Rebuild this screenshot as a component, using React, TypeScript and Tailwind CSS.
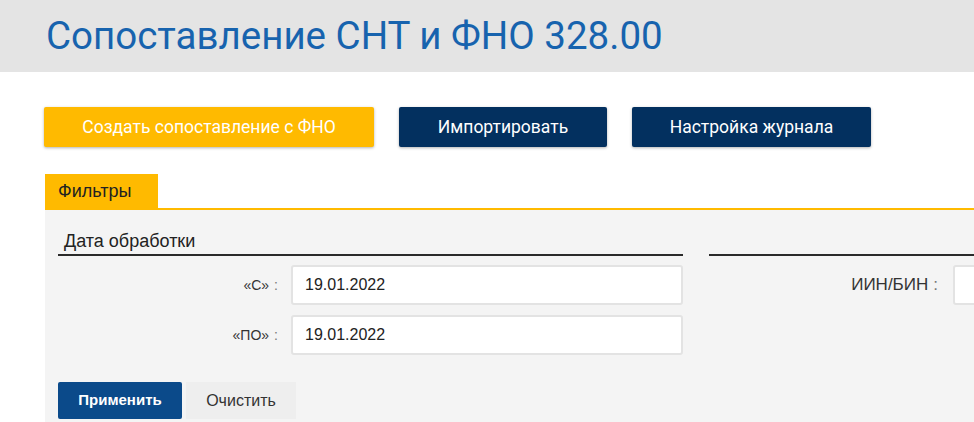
import React from "react";

const sans = { fontFamily: '"Liberation Sans", Arial, sans-serif' };

function DateRow({ label, value }: { label: string; value: string }) {
  return (
    <div className="flex items-center">
      <div className="flex w-[220px] justify-end text-[14px] text-[#333]">
        <span>{label}</span>
        <span className="ml-[5px] text-[#777]">:</span>
      </div>
      <div className="ml-[13px] flex h-[40px] w-[392px] items-center rounded-[3px] border-2 border-[#e3e3e3] bg-white pl-[12px] text-[16px] text-[#222]">
        {value}
      </div>
    </div>
  );
}

export default function App() {
  return (
    <div className="h-[422px] w-[974px] overflow-hidden bg-white" style={sans}>
      <div className="flex h-[72px] items-center bg-[#e4e4e4] pl-[46px]">
        <h1 className="font-['Roboto'] text-[38.5px] leading-[72px] text-[#1763ae]">Сопоставление СНТ и ФНО 328.00</h1>
      </div>

      <div className="mt-[35px] flex gap-[25px] pl-[44px] font-['Roboto'] text-[17.5px] text-white">
        <button className="h-[40px] w-[330px] rounded-[2px] bg-[#ffba00] shadow-[0_1px_3px_rgba(0,0,0,0.3)]">Создать сопоставление с ФНО</button>
        <button className="h-[40px] w-[208px] rounded-[2px] bg-[#03305f] shadow-[0_1px_3px_rgba(0,0,0,0.3)]">Импортировать</button>
        <button className="h-[40px] w-[239px] rounded-[2px] bg-[#03305f] shadow-[0_1px_3px_rgba(0,0,0,0.3)]">Настройка журнала</button>
      </div>

      <div className="ml-[45px] mt-[27px]">
        <div className="border-b-2 border-[#ffba00]">
          <div className="flex h-[34px] w-[113px] items-center bg-[#ffba00] pl-[13px] text-[18px] text-[#222]">Фильтры</div>
        </div>
        <div className="bg-[#f4f4f4] pb-[10px] pl-[13px] pt-[21px]">
          <div className="flex gap-[26px]">
            <div className="w-[625px] shrink-0">
              <div className="border-b-2 border-[#2a2a2a] pb-[3px] pl-[6px] text-[18px] leading-[20px] text-[#222]">Дата обработки</div>
              <div className="mt-[9px] flex flex-col gap-[10px]">
                <DateRow label="«С»" value="19.01.2022" />
                <DateRow label="«ПО»" value="19.01.2022" />
              </div>
            </div>
            <div className="w-[625px] shrink-0">
              <div className="box-content h-[20px] border-b-2 border-[#2a2a2a] pb-[3px]" />
              <div className="mt-[9px] flex items-center">
                <div className="flex w-[229px] justify-end text-[17px] text-[#333]">
                  <span>ИИН/БИН</span>
                  <span className="ml-[5px] text-[#777]">:</span>
                </div>
                <div className="ml-[15px] h-[40px] w-[300px] rounded-[3px] border-2 border-[#e3e3e3] bg-white" />
              </div>
            </div>
          </div>
          <div className="mt-[27px] flex gap-[4px]">
            <button className="h-[37px] w-[124px] rounded-[2px] bg-[#0b4a8a] text-[15px] font-bold text-white">Применить</button>
            <button className="h-[37px] w-[110px] bg-[#eeeeee] text-[16px] text-[#333]">Очистить</button>
          </div>
        </div>
      </div>
    </div>
  );
}
